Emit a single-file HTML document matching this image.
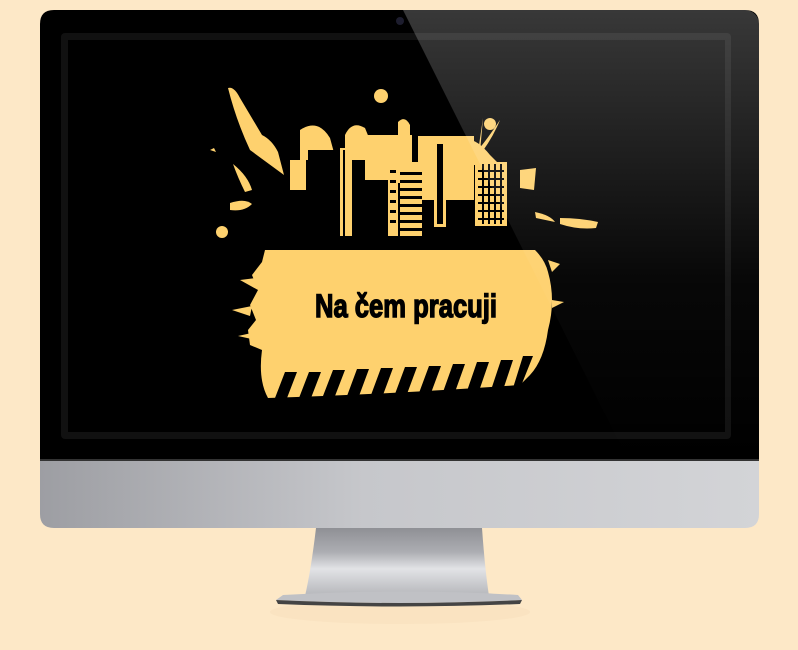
<!DOCTYPE html>
<html><head><meta charset="utf-8"><style>
html,body{margin:0;padding:0;background:#fde8c7;width:798px;height:650px;overflow:hidden}
</style></head><body>
<svg width="798" height="650" viewBox="0 0 798 650" xmlns="http://www.w3.org/2000/svg">
<defs>
<linearGradient id="chin" x1="0" x2="1" y1="0" y2="0">
<stop offset="0" stop-color="#9d9ea3"/><stop offset="0.45" stop-color="#c6c7cb"/><stop offset="1" stop-color="#d3d4d7"/></linearGradient>
<linearGradient id="stand" x1="0" x2="0" y1="0" y2="1">
<stop offset="0" stop-color="#8f9095"/><stop offset="0.35" stop-color="#acadb2"/><stop offset="0.6" stop-color="#e2e3e6"/><stop offset="1" stop-color="#b5b6ba"/></linearGradient>
<linearGradient id="refl" x1="0" x2="0" y1="10" y2="460" gradientUnits="userSpaceOnUse">
<stop offset="0" stop-color="#fff" stop-opacity="0.22"/><stop offset="0.6" stop-color="#fff" stop-opacity="0.03"/><stop offset="1" stop-color="#fff" stop-opacity="0"/></linearGradient>
<clipPath id="mon"><rect x="40" y="10" width="719" height="452" rx="14"/></clipPath>
</defs>
<ellipse cx="400" cy="612" rx="130" ry="12" fill="#f8e0bc" opacity="0.6"/>
<!-- stand -->
<path d="M316 528 L482 528 Q485 570 489 596 L305 596 Q311 570 316 528Z" fill="url(#stand)"/>
<path d="M283 595 Q400 588 518 595 L522 600 Q400 606 276 600Z" fill="#c0c1c5"/>
<path d="M276 600 Q400 606 522 600 L520 604 Q400 609 278 604Z" fill="#444"/>
<!-- chin -->
<path d="M40 455 H759 V514 Q759 528 745 528 H54 Q40 528 40 514Z" fill="url(#chin)"/>
<!-- bezel -->
<path d="M54 10 H745 Q759 10 759 24 V460 H40 V24 Q40 10 54 10Z" fill="#000"/>
<rect x="40" y="459" width="719" height="2" fill="#333"/>
<rect x="61" y="33" width="670" height="406" rx="4" fill="#111"/>
<rect x="68" y="40" width="657" height="392" fill="#000"/>
<circle cx="400" cy="21" r="4" fill="#1d1d2e"/>
<!-- artwork -->
<g fill="#fed16e">
<path d="M228 88 Q234 86 240 98 L262 135 Q272 140 278 152 L284 175 L250 150 Q236 120 228 88Z"/>
<circle cx="381" cy="96" r="7"/><circle cx="490" cy="124" r="6"/><circle cx="222" cy="232" r="6"/>
<path d="M480 152 L483 118 L478 152Z"/>
<path d="M500 120 Q480 150 470 158 L476 160 Q492 140 500 120Z"/>
<path d="M233 164 Q248 176 252 190 L245 192 Q238 178 233 164Z"/>
<path d="M230 203 Q245 198 252 204 Q244 212 230 210Z"/>
<path d="M560 218 Q580 218 598 222 L596 228 Q578 230 560 224Z"/>
<path d="M535 212 Q550 215 555 222 L536 218Z"/>
<path d="M520 170 L536 168 L534 190 L520 188Z"/>
<path d="M300 130 Q318 118 330 138 L336 160 L300 160Z"/>
<path d="M345 135 Q352 120 365 128 L378 160 L345 160Z"/>
<path d="M398 122 Q405 115 410 125 L410 160 L398 160Z"/>
<path d="M455 145 Q470 130 490 155 L500 165 L455 165Z"/>
<path d="M210 150 L214 148 L216 152Z"/>
<rect x="290" y="160" width="16" height="30"/>
<rect x="340" y="148" width="12" height="88"/>
<rect x="365" y="135" width="47" height="48"/>
<rect x="388" y="160" width="10" height="76"/>
<path d="M390 160 L394 150 L398 160Z"/>
<rect x="400" y="162" width="22" height="74"/>
<rect x="418" y="136" width="56" height="64"/>
<rect x="434" y="137" width="12" height="90"/>
<rect x="475" y="162" width="32" height="64"/>
<path d="M265 250 H535 Q545 260 548 272 Q556 300 548 330 Q544 360 530 375 L520 385 Q450 390 390 393 Q330 396 268 398 Q258 380 262 350 L250 345 L248 330 L256 320 L250 305 L258 290 L252 275 L262 262Z"/>
<path d="M240 280 L256 278 L258 290Z M232 310 L252 306 L250 316Z M238 336 L256 332 L256 340Z M548 260 L560 264 L552 272Z M552 300 L564 302 L552 308Z"/>
</g>
<g fill="#000">
<rect x="343" y="150" width="2" height="86"/>
<rect x="437" y="144" width="6" height="80"/>
<rect x="400" y="172" width="22" height="3"/><rect x="400" y="180" width="22" height="3"/><rect x="400" y="188" width="22" height="3"/><rect x="400" y="196" width="22" height="3"/><rect x="400" y="204" width="22" height="3"/><rect x="400" y="212" width="22" height="3"/><rect x="400" y="220" width="22" height="3"/><rect x="400" y="228" width="22" height="3"/>
<rect x="390" y="170" width="6" height="3"/><rect x="390" y="180" width="6" height="3"/><rect x="390" y="190" width="6" height="3"/><rect x="390" y="200" width="6" height="3"/><rect x="390" y="210" width="6" height="3"/><rect x="390" y="220" width="6" height="3"/>
<rect x="478" y="170" width="26" height="2"/><rect x="478" y="178" width="26" height="2"/><rect x="478" y="186" width="26" height="2"/><rect x="478" y="194" width="26" height="2"/><rect x="478" y="202" width="26" height="2"/><rect x="478" y="210" width="26" height="2"/><rect x="478" y="218" width="26" height="2"/>
<rect x="482" y="164" width="2" height="60"/><rect x="488" y="164" width="2" height="60"/><rect x="494" y="164" width="2" height="60"/><rect x="500" y="164" width="2" height="60"/>
<rect x="252" y="180" width="30" height="60"/>
<rect x="308" y="150" width="30" height="90"/>
<rect x="352" y="180" width="36" height="56"/>
<path d="M275 398 L285 372 L297 372 L287 398Z M299 398 L309 372 L321 372 L311 398Z M323 396 L333 370 L345 370 L335 396Z M347 396 L357 369 L369 369 L359 396Z M371 395 L381 368 L393 368 L383 395Z M395 394 L405 367 L417 367 L407 394Z M419 393 L429 366 L441 366 L431 393Z M443 392 L453 364 L465 364 L455 392Z M467 391 L477 362 L489 362 L479 391Z M491 390 L501 360 L513 360 L503 390Z M513 388 L523 356 L533 356 L521 386Z"/>
</g>
<text x="406" y="317" font-family="'Liberation Sans Narrow','Liberation Sans',sans-serif" font-weight="bold" font-size="32" text-anchor="middle" fill="#000" stroke="#000" stroke-width="1.4" transform="translate(406 0) scale(0.8 1) translate(-406 0)">Na čem pracuji</text>
<g clip-path="url(#mon)"><path d="M403 10 L759 10 L759 460 L628 460Z" fill="url(#refl)"/></g>
</svg>
</body></html>
